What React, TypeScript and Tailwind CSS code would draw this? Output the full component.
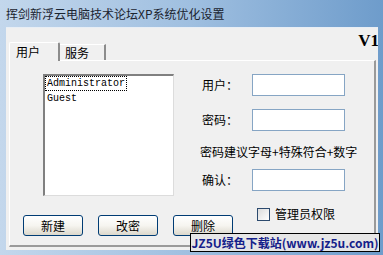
import React from "react";

const cjk = "font-['Noto_Sans_CJK_SC','Noto_Sans',sans-serif]";

function Field({ label }: { label: string }) {
  return (
    <div className="flex items-center h-[22px]">
      <span className="w-[50px] text-[12px] leading-[16px] text-black">{label}</span>
      <div className="w-[93px] h-[22px] bg-white border border-[#86a5c4]" />
    </div>
  );
}

function Btn({ label }: { label: string }) {
  return (
    <div className="w-[60px] h-[21px] shrink-0 flex items-center justify-center rounded-[3px] border border-[#003c74] bg-gradient-to-b from-white via-[#f6f5f0] to-[#dcd8cc] text-[12px] leading-[16px] text-black">
      {label}
    </div>
  );
}

export default function App() {
  return (
    <div className={`relative w-[383px] h-[255px] overflow-hidden bg-gradient-to-r from-[#c3d7ec] via-[#9fbfe0] to-[#6e9ccb] ${cjk}`}>
      <div className="h-[27px] flex items-center pl-[6px] text-[12px] leading-[16px] text-[#1b2430]">
        挥剑新浮云电脑技术论坛XP系统优化设置
      </div>

      <div className="relative ml-[6px] w-[372px] h-[223px] bg-[#f0f0f0] border-t border-[#e8eef5] overflow-hidden">
        <div className="absolute right-[-1px] top-[3px] font-['Liberation_Serif',serif] font-bold text-[17px] leading-[20px] text-black">
          V1
        </div>

        <div className="pl-[3px] pt-[14px]">
          <div className="flex items-end h-[18px]">
            <div className="relative z-10 w-[51px] h-[19px] mb-[-1px] bg-[#f0f0f0] border-t border-l border-white border-r-2 border-r-[#8c8c8c] rounded-t-[2px] pl-[6px] text-[12px] leading-[16px] pt-[1px]">
              用户
            </div>
            <div className="w-[46px] h-[16px] bg-[#f0f0f0] border-t border-white border-r-2 border-r-[#8c8c8c] pl-[5px] text-[12px] leading-[16px]">
              服务
            </div>
          </div>

          <div className="w-[367px] h-[187px] border-t border-l border-white border-r-2 border-r-[#9a9a9a] border-b-2 border-b-[#9a9a9a] flex pl-[13px] pt-[13px]">
            <div className="w-[179px] shrink-0 flex flex-col">
              <div className="ml-[20px] w-[131px] h-[122px] bg-white border-t-2 border-l-2 border-t-[#808080] border-l-[#808080] border-b border-r border-b-[#dcdcdc] border-r-[#dcdcdc] font-['Liberation_Mono',monospace] text-[10px] leading-[13px] text-black">
                <div className="w-max border border-dotted border-black px-[1px]">Administrator</div>
                <div className="pl-[2px] pt-[1px]">Guest</div>
              </div>
              <div className="flex gap-[15px] mt-[19px] w-max">
                <Btn label="新建" />
                <Btn label="改密" />
                <Btn label="删除" />
              </div>
            </div>

            <div className="flex flex-col">
              <Field label="用户：" />
              <div className="mt-[13px]">
                <Field label="密码：" />
              </div>
              <div className="mt-[13px] -ml-[2px] text-[12px] leading-[16px] text-black whitespace-nowrap">
                密码建议字母+特殊符合+数字
              </div>
              <div className="mt-[9px]">
                <Field label="确认：" />
              </div>
              <div className="mt-[15px] ml-[55px] flex items-center gap-[5px]">
                <div className="w-[13px] h-[13px] border border-[#2c4a6e] bg-gradient-to-br from-[#dcdcdc] to-white" />
                <span className="text-[12px] leading-[16px] text-black">管理员权限</span>
              </div>
            </div>
          </div>
        </div>
      </div>

      <div className="absolute left-[190px] top-[233px] w-[190px] h-[19px] bg-[#e6e6e6] border-[1.5px] border-black flex items-center justify-center text-[12px] leading-[16px] font-bold text-[#14208a] whitespace-nowrap">
        JZ5U绿色下载站(www.jz5u.com)
      </div>
    </div>
  );
}
